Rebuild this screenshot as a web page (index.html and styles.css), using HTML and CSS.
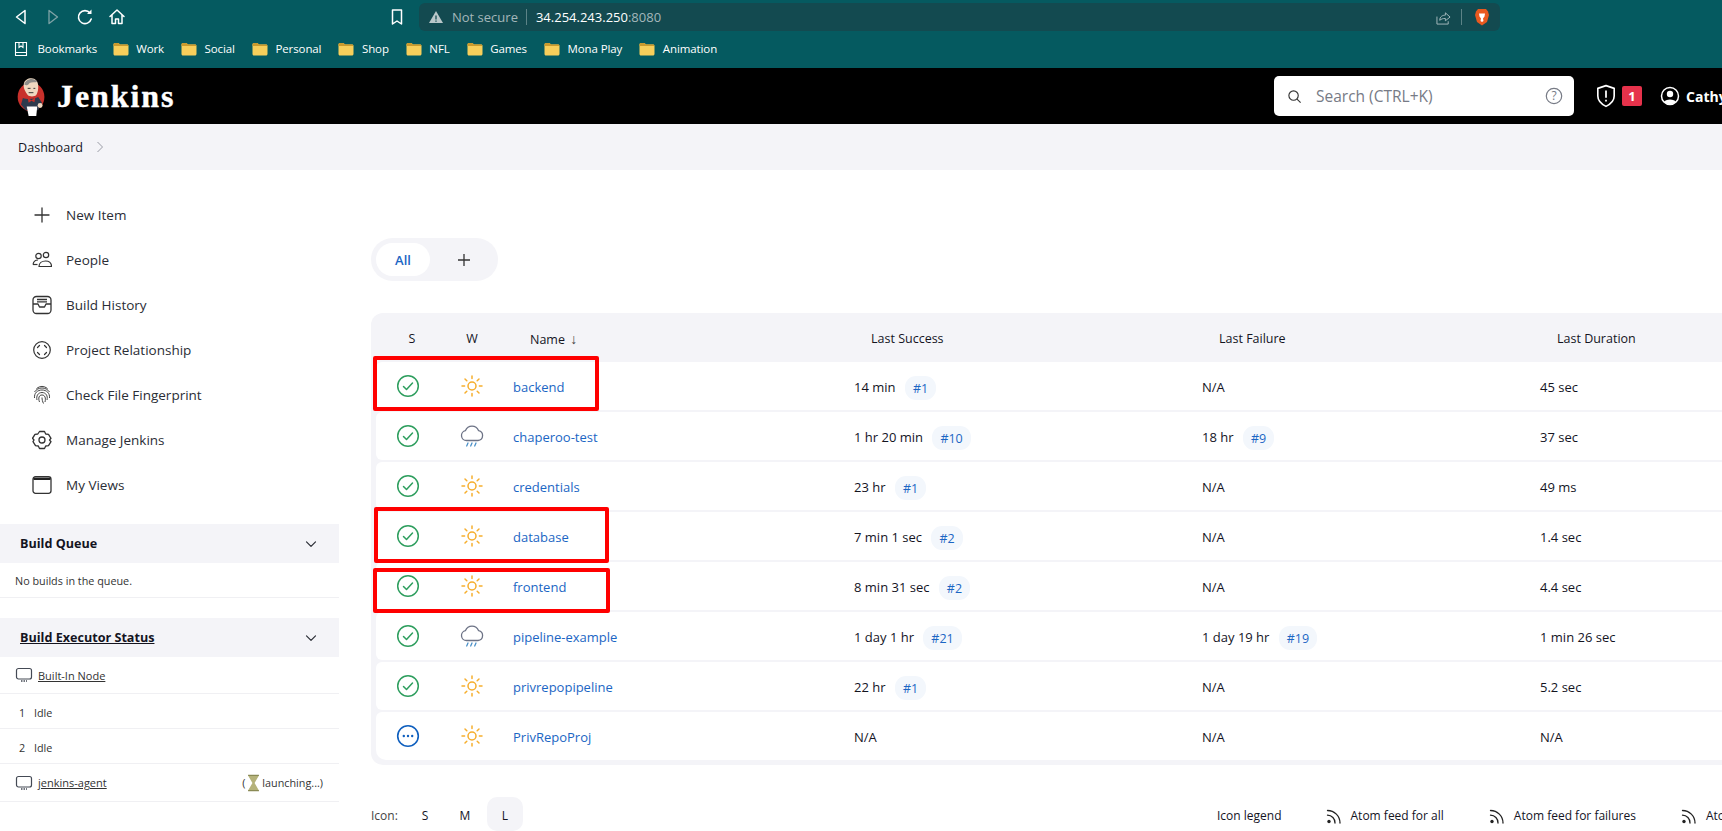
FILE: index.html
```html
<!DOCTYPE html>
<html lang="en">
<head>
<meta charset="utf-8">
<title>Dashboard [Jenkins]</title>
<link rel="stylesheet" href="styles.css">
</head>
<body>
<svg class="defs" width="0" height="0" aria-hidden="true">
  <symbol id="folder" viewBox="0 0 16 16"><path d="M.5 3.500C.5 2.700 1.100 2 2 2h3.500L7 3.500h7c.8 0 1.500.7 1.500 1.500v8c0 .8-.7 1.500-1.500 1.500H2c-.9 0-1.500-.7-1.500-1.500z" fill="#f7cf5b"/><path d="M.5 3.500C.5 2.700 1.100 2 2 2h3.500L7 3.500h7c.8 0 1.500.7 1.500 1.500H.5z" fill="#c99a2e"/></symbol>
  <symbol id="ok" viewBox="0 0 24 24"><circle cx="12" cy="12" r="10.300" fill="none" stroke="#2e9e5e" stroke-width="1.500"/><path d="M7.500 12.500l3 3 6-6.500" fill="none" stroke="#2e9e5e" stroke-width="1.500" stroke-linecap="round" stroke-linejoin="round"/></symbol>
  <symbol id="sun" viewBox="0 0 24 24"><circle cx="12" cy="12" r="4" fill="none" stroke="#f6ae2d" stroke-width="1.500"/><path d="M12 2v2.600M12 19.400V22M2 12h2.600M19.400 12H22M5 5l1.800 1.800M17.200 17.200L19 19M5 19l1.800-1.800M17.200 6.800L19 5" fill="none" stroke="#f6ae2d" stroke-width="1.500" stroke-linecap="round"/></symbol>
  <symbol id="rain" viewBox="0 0 24 24"><path d="M6.500 16.500a5 5 0 0 1-1-9.900 7 7 0 0 1 13 0 5 5 0 0 1-.5 9.900z" fill="none" stroke="#6c7285" stroke-width="1.300" stroke-linejoin="round"/><path d="M8 19l-1.300 3M12 19l-1.300 3M16 19l-1.300 3" fill="none" stroke="#4a90c8" stroke-width="1.300" stroke-linecap="round"/></symbol>
  <symbol id="pending" viewBox="0 0 24 24"><circle cx="12" cy="12" r="10.300" fill="none" stroke="#0f5fbe" stroke-width="1.600"/><circle cx="7.800" cy="12" r="1.200" fill="#0f5fbe"/><circle cx="12" cy="12" r="1.200" fill="#0f5fbe"/><circle cx="16.200" cy="12" r="1.200" fill="#0f5fbe"/></symbol>
  <symbol id="computer" viewBox="0 0 18 18"><rect x="1.500" y="2.500" width="15" height="10.500" rx="2" fill="none" stroke="#444a55" stroke-width="1.200"/><path d="M6 15h1.500M8.500 15H10M11 15h1" stroke="#444a55" stroke-width="1.500"/></symbol>
  <symbol id="rss" viewBox="0 0 16 16"><circle cx="3" cy="13.500" r="1.700" fill="#222"/><path d="M1.500 7.200a7.500 7.500 0 0 1 7.500 7.800M1.500 2.500a12.500 12.500 0 0 1 12.500 12.500" fill="none" stroke="#222" stroke-width="1.300" stroke-linecap="round"/></symbol>
  <symbol id="chev" viewBox="0 0 14 14"><path d="M2.500 4.800L7 9.300l4.500-4.500" fill="none" stroke="#2a2d35" stroke-width="1.200" stroke-linecap="round" stroke-linejoin="round"/></symbol>
</svg>

<div class="browser">
  <div class="toolbar">
    <div class="nav-icons">
      <svg class="tool" viewBox="0 0 20 20"><path d="M14 3.500L5.500 10l8.500 6.500z" fill="none" stroke="#fff" stroke-width="1.500" stroke-linejoin="round"/></svg>
      <svg class="tool dim" viewBox="0 0 20 20"><path d="M6 3.500L14.500 10 6 16.500z" fill="none" stroke="#7fa3a6" stroke-width="1.300" stroke-linejoin="round"/></svg>
      <svg class="tool" viewBox="0 0 20 20"><path d="M15 6a6.500 6.500 0 1 0 1.200 6" fill="none" stroke="#fff" stroke-width="1.600" stroke-linecap="round"/><path d="M16.500 2.500v4.500H12z" fill="#fff"/></svg>
      <svg class="tool" viewBox="0 0 20 20"><path d="M3 9.500L10 3l7 6.500M5 8v8.500h3.500V12h3v4.500H15V8" fill="none" stroke="#fff" stroke-width="1.500" stroke-linejoin="round" stroke-linecap="round"/></svg>
    </div>
    <svg class="bookmark-page" viewBox="0 0 14 18"><path d="M2.500 2h9v14L7 13l-4.500 3z" fill="none" stroke="#fff" stroke-width="1.500" stroke-linejoin="round"/></svg>
    <div class="urlbar">
      <svg class="warn" viewBox="0 0 16 16"><path d="M8 2l7 12H1z" fill="#b9c7c9"/><path d="M8 6.500v4M8 11.500v1.300" stroke="#134a50" stroke-width="1.300"/></svg>
      <span class="not-secure">Not secure</span>
      <span class="url-sep"></span>
      <span class="url"><span class="url-host">34.254.243.250</span>:8080</span>
      <span class="url-spacer"></span>
      <svg class="share" viewBox="0 0 16 16"><path d="M1 7v8h12v-3" fill="none" stroke="#a9bcbf" stroke-width="1"/><path d="M4 11c0-4 3-5.500 6-5.500V3l5 4.500-5 4V9c-2.500 0-4.500.5-6 2z" fill="none" stroke="#a9bcbf" stroke-width="1" stroke-linejoin="round"/></svg>
      <span class="url-sep right"></span>
      <svg class="brave" viewBox="0 0 16 18"><path d="M4 1h8l2 2.500L15 7l-2 7-5 3.500L3 14 1 7l1-3.500z" fill="#e8591f"/><path d="M5 5.500h6l-.5 3L9 10.500 9.500 13 8 14l-1.500-1L7 10.500 5.500 8.500z" fill="#fff"/></svg>
    </div>
  </div>
  <div class="bookmarks">
    <span class="bm bm-root"><svg class="bm-book" viewBox="0 0 16 16"><path d="M2.500 1.500h11v13h-11zM2.500 11.500h11" fill="none" stroke="#fff" stroke-width="1.100"/><path d="M6 1.500v5l2-1.500 2 1.500v-5" fill="none" stroke="#fff" stroke-width="1.100"/></svg>Bookmarks</span>
    <span class="bm"><svg class="bm-icon"><use href="#folder"/></svg>Work</span>
    <span class="bm"><svg class="bm-icon"><use href="#folder"/></svg>Social</span>
    <span class="bm"><svg class="bm-icon"><use href="#folder"/></svg>Personal</span>
    <span class="bm"><svg class="bm-icon"><use href="#folder"/></svg>Shop</span>
    <span class="bm"><svg class="bm-icon"><use href="#folder"/></svg>NFL</span>
    <span class="bm"><svg class="bm-icon"><use href="#folder"/></svg>Games</span>
    <span class="bm"><svg class="bm-icon"><use href="#folder"/></svg>Mona Play</span>
    <span class="bm"><svg class="bm-icon"><use href="#folder"/></svg>Animation</span>
  </div>
</div>

<header class="jenkins-header">
  <div class="brand">
    <svg class="logo" viewBox="0 0 30 44">
      <ellipse cx="14.500" cy="23" rx="14" ry="15" fill="#c8302b"/>
      <path d="M7 9c1-6 11-8 14-2 2 4 1 11-1 14-2 2-7 2-9 0-2-3-5-7-4-12z" fill="#efd8c0"/>
      <path d="M7.500 10c1-6 10-8 13.500-3-2 1-6 0-8 1.500-1 2-3 3-5.500 1.500z" fill="#8d8c89"/>
      <path d="M6 24c4 1.500 12 1.500 16-1l4 6-4 8H9l-5-6z" fill="#2d3a4d"/>
      <path d="M11 24l4 2.500 4-3-1 5-3-1.500-3 2z" fill="#c8302b"/>
      <path d="M10 33h11l-1 10h-8z" fill="#fff"/>
      <circle cx="24" cy="32" r="2.600" fill="#efd8c0"/>
      <path d="M11 14h3M17 14h2M12 18.500h5" stroke="#333" stroke-width="1"/>
    </svg>
    <span class="brand-name">Jenkins</span>
  </div>
  <div class="header-tools">
    <div class="search">
      <svg class="search-icon" viewBox="0 0 16 16"><circle cx="7" cy="7" r="5" fill="none" stroke="#333" stroke-width="1.200"/><path d="M10.700 10.700l3.800 3.800" stroke="#333" stroke-width="1.200"/></svg>
      <span class="search-text">Search (CTRL+K)</span>
      <svg class="help" viewBox="0 0 18 18"><circle cx="9" cy="9" r="7.700" fill="none" stroke="#777b86" stroke-width="1.200"/><text x="9" y="13" text-anchor="middle" class="help-q">?</text></svg>
    </div>
    <svg class="shield" viewBox="0 0 20 22"><path d="M10 1.500l7.500 2.500v7c0 4.500-3.500 7.500-7.500 9.500C6 18.500 2.500 15.500 2.500 11V4z" fill="none" stroke="#fff" stroke-width="1.500" stroke-linejoin="round"/><path d="M10 6v6.500M10 14.500v1.500" stroke="#fff" stroke-width="1.600"/></svg>
    <span class="badge">1</span>
    <svg class="user" viewBox="0 0 20 20"><circle cx="10" cy="10" r="8.500" fill="none" stroke="#fff" stroke-width="1.500"/><circle cx="10" cy="8" r="3.200" fill="#fff"/><path d="M4 16c1-3.500 11-3.500 12 0-3 3-9 3-12 0z" fill="#fff"/></svg>
    <span class="user-name">Cathy</span>
  </div>
</header>

<nav class="breadcrumbs">
  <span>Dashboard</span>
  <svg class="crumb-chev" viewBox="0 0 8 14"><path d="M1.500 2l5 5-5 5" fill="none" stroke="#9a9ca6" stroke-width="1"/></svg>
</nav>

<div class="page">
  <aside class="sidebar">
    <ul class="tasks">
      <li class="task"><svg class="task-icon" viewBox="0 0 20 20"><path d="M10 3v14M3 10h14" stroke="#333" stroke-width="1.300" stroke-linecap="round"/></svg>New Item</li>
      <li class="task"><svg class="task-icon" viewBox="0 0 20 20"><g fill="none" stroke="#333" stroke-width="1.200"><circle cx="6.500" cy="6" r="2.700"/><circle cx="14" cy="5" r="2.700"/><path d="M1 14.500c.5-3 2-4.500 5-4.500"/><path d="M7 16.500c0-3.500 3-5.500 6.500-5.500s6 2 6 5.500z"/><path d="M1 14.500h4.500"/></g></svg>People</li>
      <li class="task"><svg class="task-icon" viewBox="0 0 20 20"><g fill="none" stroke="#333" stroke-width="1.300" stroke-linejoin="round"><rect x="1" y="1.500" width="18" height="17" rx="3.500"/><path d="M1 9h5l1.500 3h5L14 9h5"/><path d="M5 4.500h10M5 6.800h10"/></g></svg>Build History</li>
      <li class="task"><svg class="task-icon" viewBox="0 0 20 20"><g fill="none" stroke="#333" stroke-width="1.200"><circle cx="10" cy="10" r="8.300"/><path d="M7.500 5.500l-2 2M12.500 5.500l2 2M5.500 12.500l2 2M14.500 12.500l-2 2" stroke-linecap="round"/></g></svg>Project Relationship</li>
      <li class="task"><svg class="task-icon" viewBox="0 0 20 20"><g fill="none" stroke="#444" stroke-width="1"><path d="M4.500 3.500a9 9 0 0 1 11 0"/><path d="M2.500 7a9 9 0 0 1 15 0"/><path d="M2.500 13c-.5-5 3-8 7.500-8s8 3 7.500 8"/><path d="M5 15c-1-4 1-7.500 5-7.500s6 3.500 5 7.500"/><path d="M7.500 17c-1.500-4-.5-7 2.500-7s4 3 3 7"/><path d="M10 12.500c0 2 .5 4 1.500 6"/></g></svg>Check File Fingerprint</li>
      <li class="task"><svg class="task-icon" viewBox="0 0 20 20"><g fill="none" stroke="#333" stroke-width="1.300" stroke-linejoin="round"><path d="M7.500 1.500h5l1.200 2.500 2.800.3 2.500 4-1.500 1.700 1.500 1.700-2.500 4-2.800.3-1.200 2.500h-5l-1.200-2.500-2.800-.3-2.500-4L2 10 .5 8.300l2.500-4 2.800-.3z"/><circle cx="10" cy="10" r="3"/></g></svg>Manage Jenkins</li>
      <li class="task"><svg class="task-icon" viewBox="0 0 20 20"><rect x="1" y="1.700" width="18" height="16.600" rx="2.500" fill="none" stroke="#333" stroke-width="1.300"/><path d="M1.500 2.500h17v2.500h-17z" fill="#222"/></svg>My Views</li>
    </ul>

    <section class="pane queue">
      <div class="pane-head"><span>Build Queue</span><svg class="pane-chev"><use href="#chev"/></svg></div>
      <div class="pane-row empty">No builds in the queue.</div>
    </section>

    <section class="pane executors">
      <div class="pane-head"><span class="under">Build Executor Status</span><svg class="pane-chev"><use href="#chev"/></svg></div>
      <div class="pane-row node"><svg class="node-icon"><use href="#computer"/></svg><span class="under">Built-In Node</span></div>
      <div class="pane-row slot"><span class="slot-num">1</span>Idle</div>
      <div class="pane-row slot"><span class="slot-num">2</span>Idle</div>
      <div class="pane-row node agent"><svg class="node-icon"><use href="#computer"/></svg><span class="under">jenkins-agent</span>
        <span class="launch">(<svg class="hourglass" viewBox="0 0 12 16"><path d="M1 1h10L7 8l4 7H1l4-7z" fill="#b5b27a"/><path d="M1 1h10M1 15h10" stroke="#8a8a55" stroke-width="1.200"/></svg>launching...)</span></div>
    </section>
  </aside>

  <main class="main">
    <div class="tabs">
      <span class="tab active">All</span>
      <span class="tab add"><svg class="tab-plus" viewBox="0 0 14 14"><path d="M7 1v12M1 7h12" stroke="#333" stroke-width="1.300"/></svg></span>
    </div>

    <div class="table">
      <div class="tr th">
        <span class="c-s">S</span><span class="c-w">W</span>
        <span class="c-h">Name <span class="sort">↓</span></span>
        <span class="c-h">Last Success</span><span class="c-h">Last Failure</span><span class="c-h">Last Duration</span>
      </div>
      <div class="tr">
        <span class="c-s"><svg class="st"><use href="#ok"/></svg></span><span class="c-w"><svg class="wx"><use href="#sun"/></svg></span>
        <a class="job">backend</a><span>14 min <em class="bn">#1</em></span><span>N/A</span><span>45 sec</span>
      </div>
      <div class="tr">
        <span class="c-s"><svg class="st"><use href="#ok"/></svg></span><span class="c-w"><svg class="wx"><use href="#rain"/></svg></span>
        <a class="job">chaperoo-test</a><span>1 hr 20 min <em class="bn">#10</em></span><span>18 hr <em class="bn">#9</em></span><span>37 sec</span>
      </div>
      <div class="tr">
        <span class="c-s"><svg class="st"><use href="#ok"/></svg></span><span class="c-w"><svg class="wx"><use href="#sun"/></svg></span>
        <a class="job">credentials</a><span>23 hr <em class="bn">#1</em></span><span>N/A</span><span>49 ms</span>
      </div>
      <div class="tr">
        <span class="c-s"><svg class="st"><use href="#ok"/></svg></span><span class="c-w"><svg class="wx"><use href="#sun"/></svg></span>
        <a class="job">database</a><span>7 min 1 sec <em class="bn">#2</em></span><span>N/A</span><span>1.4 sec</span>
      </div>
      <div class="tr">
        <span class="c-s"><svg class="st"><use href="#ok"/></svg></span><span class="c-w"><svg class="wx"><use href="#sun"/></svg></span>
        <a class="job">frontend</a><span>8 min 31 sec <em class="bn">#2</em></span><span>N/A</span><span>4.4 sec</span>
      </div>
      <div class="tr">
        <span class="c-s"><svg class="st"><use href="#ok"/></svg></span><span class="c-w"><svg class="wx"><use href="#rain"/></svg></span>
        <a class="job">pipeline-example</a><span>1 day 1 hr <em class="bn">#21</em></span><span>1 day 19 hr <em class="bn">#19</em></span><span>1 min 26 sec</span>
      </div>
      <div class="tr">
        <span class="c-s"><svg class="st"><use href="#ok"/></svg></span><span class="c-w"><svg class="wx"><use href="#sun"/></svg></span>
        <a class="job">privrepopipeline</a><span>22 hr <em class="bn">#1</em></span><span>N/A</span><span>5.2 sec</span>
      </div>
      <div class="tr">
        <span class="c-s"><svg class="st"><use href="#pending"/></svg></span><span class="c-w"><svg class="wx"><use href="#sun"/></svg></span>
        <a class="job">PrivRepoProj</a><span>N/A</span><span>N/A</span><span>N/A</span>
      </div>
      <span class="mark mark-backend"></span>
      <span class="mark mark-database"></span>
      <span class="mark mark-frontend"></span>
    </div>

    <div class="table-foot">
      <div class="sizes">
        <span class="size-label">Icon:</span>
        <span class="size">S</span><span class="size">M</span><span class="size on">L</span>
      </div>
      <div class="legend">
        <span class="legend-text">Icon legend</span>
        <span class="feed"><svg class="rss"><use href="#rss"/></svg>Atom feed for all</span>
        <span class="feed"><svg class="rss"><use href="#rss"/></svg>Atom feed for failures</span>
        <span class="feed"><svg class="rss"><use href="#rss"/></svg>Atom feed for just latest builds</span>
      </div>
    </div>
  </main>
</div>
</body>
</html>
```

FILE: styles.css
```css
* { box-sizing: border-box; }
html, body { margin: 0; height: 831px; overflow: hidden; background: #fff; }
body { width: 1722px; font-family: "Open Sans", "Noto Sans", "Liberation Sans", sans-serif; font-size: 13px; color: #14141f; }
.defs { position: absolute; }

/* Browser chrome */
.browser { height: 68px; background: #055a60; color: #fff; display: flex; flex-direction: column; }
.toolbar { height: 34px; display: flex; align-items: center; }
.nav-icons { display: flex; gap: 12px; padding-left: 11px; width: 390px; flex: none; }
.tool { width: 20px; height: 20px; }
.bookmark-page { width: 14px; height: 18px; flex: none; }
.urlbar { width: 1081px; height: 28px; margin-left: 15px; border-radius: 6px; background: #134a50; display: flex; align-items: center; padding-left: 9px; font-size: 13px; color: #a3b7ba; flex: none; }
.warn { width: 16px; height: 16px; margin-right: 8px; }
.not-secure { white-space: nowrap; }
.url-sep { width: 1px; height: 16px; background: #5d8387; margin: 0 9px 0 8px; }
.url-sep.right { margin: 0 12px 0 10px; }
.url { white-space: nowrap; }
.url-host { color: #fff; }
.url-spacer { flex: 1; }
.share { width: 15px; height: 15px; }
.brave { width: 16px; height: 18px; margin-right: 10px; }
.bookmarks { flex: 1; display: flex; align-items: center; padding-left: 13px; font-size: 11.500px; gap: 17px; padding-bottom: 5px; letter-spacing: -.1px; }
.bm { display: flex; align-items: center; gap: 7.500px; white-space: nowrap; }
.bm-icon { width: 16px; height: 16px; }
.bm-book { width: 16px; height: 16px; margin-right: 1px; }
.bm-root { margin-right: -1.500px; }

/* Jenkins header */
.jenkins-header { height: 56px; background: #000; display: flex; align-items: center; justify-content: space-between; color: #fff; white-space: nowrap; overflow: hidden; }
.brand { display: flex; align-items: center; padding-left: 17px; }
.logo { width: 29px; height: 42px; margin-right: 11px; }
.brand-name { font-family: "Liberation Serif", serif; font-weight: 700; font-size: 32px; letter-spacing: 1.900px; -webkit-text-stroke: .4px #fff; }
.header-tools { display: flex; align-items: center; width: 448px; flex: none; }
.search { width: 300px; height: 40px; border-radius: 5px; background: #fff; display: flex; align-items: center; padding: 0 11px 0 13px; color: #777b86; font-size: 15.500px; margin-right: 21px; flex: none; }
.search-icon { width: 15px; height: 15px; margin-right: 14px; }
.search-text { flex: 1; }
.help { width: 18px; height: 18px; }
.help-q { font-size: 12px; fill: #777b86; font-family: "Open Sans", sans-serif; }
.shield { width: 22px; height: 24px; margin-right: 5px; flex: none; }
.badge { width: 20px; height: 20px; border-radius: 2px; background: #e6324b; font-weight: 700; font-size: 13px; text-align: center; line-height: 20px; margin-right: 18px; flex: none; }
.user { width: 20px; height: 20px; margin-right: 6px; flex: none; }
.user-name { font-weight: 700; font-size: 14px; }

/* Breadcrumbs */
.breadcrumbs { height: 46px; background: #f4f4f8; display: flex; align-items: center; padding-left: 18px; font-size: 12.600px; gap: 13px; }
.crumb-chev { width: 8px; height: 14px; }

/* Layout */
.page { display: flex; align-items: flex-start; }
.sidebar { width: 339px; flex: none; padding-top: 22px; }
.tasks { list-style: none; margin: 0; padding: 0; }
.task { height: 45px; display: flex; align-items: center; padding-left: 32px; font-size: 13.500px; color: #2a2d35; gap: 14px; }
.task-icon { width: 20px; height: 20px; flex: none; }

.pane { font-size: 10.800px; }
.queue { margin-top: 17px; }
.executors { margin-top: 20px; }
.pane-head { height: 39px; background: #f4f4f8; display: flex; align-items: center; justify-content: space-between; padding: 0 20px 0 20px; font-size: 12.600px; font-weight: 700; }
.pane-chev { width: 14px; height: 14px; margin-right: 1px; }
.pane-row { display: flex; align-items: center; border-bottom: 1px solid #f0f0f3; padding-left: 15px; color: #333; }
.queue .pane-row { height: 35px; }
.under { text-decoration: underline; }
.node { height: 37px; font-size: 11px; }
.slot { height: 35px; padding-left: 19px; padding-top: 2px; }
.slot-num { width: 15px; }
.agent { height: 38px; }
.node-icon { width: 18px; height: 18px; margin-right: 5px; }
.launch { margin-left: auto; padding-right: 16px; display: flex; align-items: center; font-size: 10.800px; }
.hourglass { width: 13px; height: 18px; margin: 0 2px 0 2px; }

/* Main */
.main { flex: 1; min-width: 0; padding: 68px 0 0 32px; }
.tabs { display: inline-flex; align-items: center; height: 43px; width: 127px; border-radius: 22px; background: #f4f4f8; padding: 0 5px; }
.tab.active { width: 54px; height: 33px; border-radius: 17px; background: #fff; color: #1b66c4; display: flex; align-items: center; justify-content: center; font-size: 13px; font-weight: 600; }
.tab.add { width: 14px; height: 14px; margin-left: 27px; display: flex; }
.tab-plus { width: 14px; height: 14px; }

.table { position: relative; margin-top: 32px; width: 1420px; border-radius: 12px; background: #f4f4f8; padding: 0 5px 5px; }
.tr { display: grid; grid-template-columns: 64px 73px 341px 348px 338px 1fr; align-items: center; height: 48px; margin-bottom: 2px; background: #fff; border-radius: 6px; font-size: 13px; }
.tr:not(.th) > :nth-child(n+3) { padding-top: 2px; }
.tr:last-of-type { margin-bottom: 0; border-radius: 6px 0 0 10px; }
.th { background: none; height: 49px; margin-bottom: 0; font-size: 12.500px; padding-top: 1px; }
.th .c-s { padding-left: 8px; }
.c-s, .c-w { display: flex; justify-content: center; }
.c-w { width: 64px; }
.c-h { padding-left: 17px; }
.sort { color: #444; font-size: 14px; margin-left: 2px; }
.st { width: 24px; height: 24px; }
.wx { width: 24px; height: 24px; }
.job { color: #1b66c4; font-weight: 500; }
.bn { font-style: normal; color: #1b66c4; background: #f3f7fc; border-radius: 11px; padding: 3.500px 8px; margin-left: 6px; font-size: 12.500px; }
.mark { position: absolute; border: 4px solid #ff0000; border-radius: 2px; pointer-events: none; }
.mark-backend { left: 2px; top: 43px; width: 226px; height: 55px; }
.mark-database { left: 3px; top: 194px; width: 235px; height: 56px; }
.mark-frontend { left: 2px; top: 255px; width: 237px; height: 45px; }

.table-foot { display: flex; justify-content: space-between; align-items: center; margin-top: 32px; width: 1420px; height: 34px; white-space: nowrap; font-size: 12px; }
.sizes { display: flex; align-items: center; }
.size-label { width: 36px; color: #444; padding-top: 3px; }
.size { width: 36px; height: 34px; border-radius: 10px; display: flex; align-items: center; justify-content: center; margin-right: 4px; font-size: 12px; padding-top: 2px; }
.size.on { background: #f4f4f8; }
.legend { display: flex; align-items: center; flex: 1; padding: 3px 0 0 690px; }
.legend-text { margin-right: 44px; }
.feed { display: flex; align-items: center; gap: 9px; margin-right: 45px; }
.rss { width: 16px; height: 16px; }
```
